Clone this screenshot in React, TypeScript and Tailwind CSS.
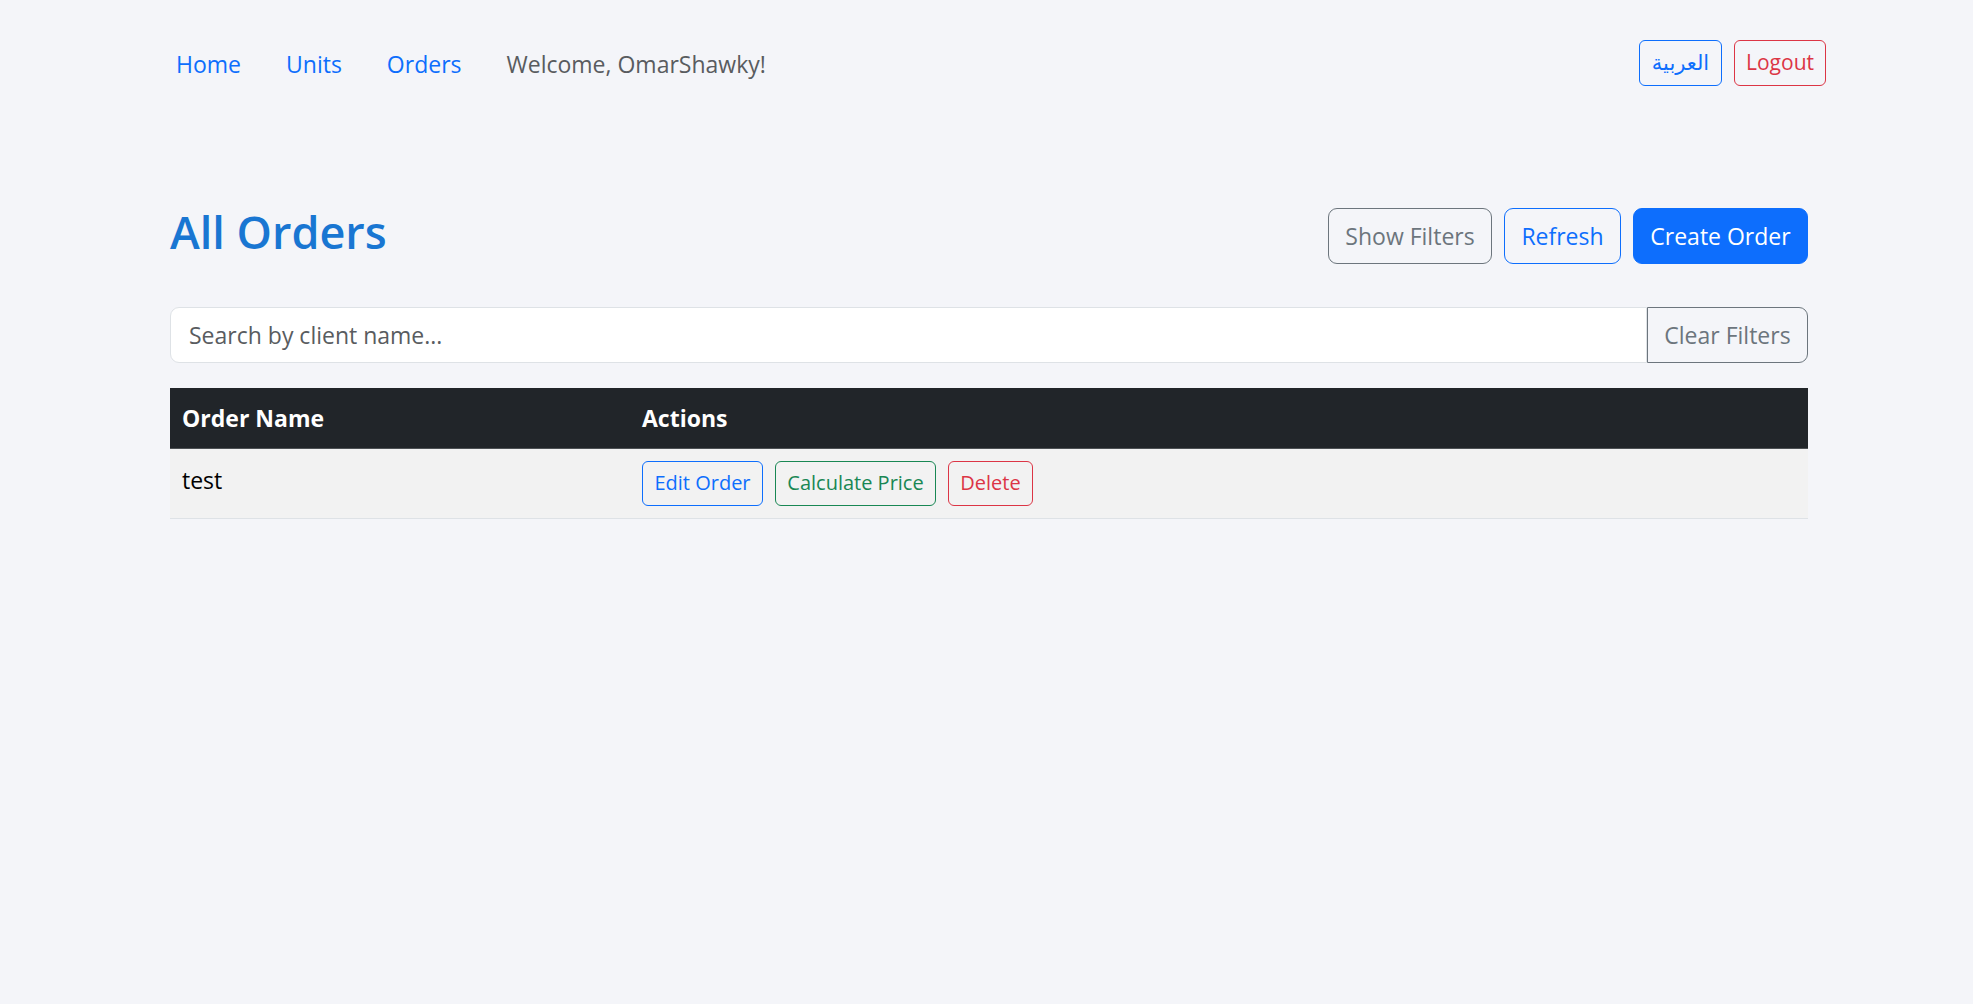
const font = { fontFamily: '"Open Sans", "Noto Sans", Arial, sans-serif' };

function NavBar() {
  return (
    <nav className="flex items-center justify-between pl-[176px] pr-[147px] pt-[40px]">
      <div className="flex items-center gap-[45px] pt-[2px] text-[23px] leading-[36px]">
        <a className="text-[#0d6efd]">Home</a>
        <a className="text-[#0d6efd]">Units</a>
        <a className="text-[#0d6efd]">Orders</a>
        <span className="text-[#595c5f]">Welcome, OmarShawky!</span>
      </div>
      <div className="flex items-center gap-[12px]">
        <button className="h-[46px] w-[83px] rounded-[6px] border border-[#0d6efd] text-[21px] text-[#0d6efd]" style={{ fontFamily: '"Noto Sans", "DejaVu Sans", sans-serif' }}>
          العربية
        </button>
        <button className="h-[46px] w-[92px] rounded-[6px] border border-[#dc3545] text-[21px] text-[#dc3545]">
          Logout
        </button>
      </div>
    </nav>
  );
}

export default function App() {
  return (
    <div className="min-h-[1004px] bg-[#f4f5f9] text-[#212529]" style={font}>
      <NavBar />
      <main className="ml-[170px] w-[1638px] pt-[122px]">
        <div className="flex items-start justify-between">
          <h2 className="mt-[-5px] text-[45px] font-semibold leading-[58px] text-[#1976d2]">All Orders</h2>
          <div className="flex gap-[12px]">
            <button className="h-[56px] w-[164px] rounded-[9px] border border-[#6c757d] text-[23px] text-[#6c757d]">Show Filters</button>
            <button className="h-[56px] w-[117px] rounded-[9px] border border-[#0d6efd] text-[23px] text-[#0d6efd]">Refresh</button>
            <button className="h-[56px] w-[175px] rounded-[9px] border border-[#0d6efd] bg-[#0d6efd] text-[23px] text-white">Create Order</button>
          </div>
        </div>

        <div className="mt-[43px] flex h-[56px]">
          <input
            className="min-w-0 flex-1 rounded-l-[9px] border border-[#dee2e6] bg-white px-[18px] text-[23px] text-[#212529] placeholder:text-[#595c5f] outline-none"
            placeholder="Search by client name..."
          />
          <button className="w-[161px] rounded-r-[9px] border border-[#6c757d] text-[23px] text-[#6c757d]">Clear Filters</button>
        </div>

        <table className="mt-[25px] w-full border-collapse text-[23px]">
          <thead>
            <tr className="h-[60px] bg-[#212529] text-left text-white">
              <th className="w-[460px] border-b border-[#4d5154] px-[12px] font-bold">Order Name</th>
              <th className="border-b border-[#4d5154] px-[12px] font-bold">Actions</th>
            </tr>
          </thead>
          <tbody>
            <tr className="border-b border-[#dee2e6] bg-[#f2f2f2]">
              <td className="px-[12px] pb-[18px] pt-[14px] align-top text-black">test</td>
              <td className="px-[12px] py-[12px]">
                <div className="flex gap-[12px]">
                  <button className="h-[45px] w-[121px] rounded-[6px] border border-[#0d6efd] text-[20px] text-[#0d6efd]">Edit Order</button>
                  <button className="h-[45px] w-[161px] rounded-[6px] border border-[#198754] text-[20px] text-[#198754]">Calculate Price</button>
                  <button className="h-[45px] w-[85px] rounded-[6px] border border-[#dc3545] text-[20px] text-[#dc3545]">Delete</button>
                </div>
              </td>
            </tr>
          </tbody>
        </table>
      </main>
    </div>
  );
}
